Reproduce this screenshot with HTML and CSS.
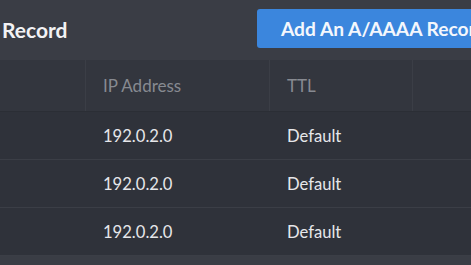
FILE: index.html
```html
<!DOCTYPE html>
<html lang="en">
<head>
<meta charset="utf-8">
<title>Records</title>
<link rel="stylesheet" href="styles.css">
</head>
<body>
<div class="page">
  <header class="topbar">
    <h1 class="title">Record</h1>
    <button class="add-btn" type="button">Add An A/AAAA Record</button>
  </header>
  <div class="table">
    <div class="row head">
      <div class="cell"></div>
      <div class="cell">IP Address</div>
      <div class="cell">TTL</div>
      <div class="cell"></div>
    </div>
    <div class="row">
      <div class="cell"></div>
      <div class="cell">192.0.2.0</div>
      <div class="cell">Default</div>
      <div class="cell"></div>
    </div>
    <div class="row">
      <div class="cell"></div>
      <div class="cell">192.0.2.0</div>
      <div class="cell">Default</div>
      <div class="cell"></div>
    </div>
    <div class="row">
      <div class="cell"></div>
      <div class="cell">192.0.2.0</div>
      <div class="cell">Default</div>
      <div class="cell"></div>
    </div>
  </div>
  <div class="footer-band"></div>
</div>
</body>
</html>
```
FILE: styles.css
```css
html, body {
  margin: 0;
  padding: 0;
  overflow: hidden;
  background: #2f323a;
}
body {
  font-family: Lato, "Open Sans", sans-serif;
  width: 471px;
  height: 265px;
}
.page {
  display: flex;
  flex-direction: column;
  width: 471px;
  overflow: hidden;
}
.topbar {
  display: flex;
  align-items: center;
  height: 60px;
  background: #3a3d45;
  overflow: hidden;
  white-space: nowrap;
}
.title {
  flex: 0 0 255px;
  margin: -2px 0 0 0;
  padding-left: 2px;
  font-size: 21px;
  font-weight: 700;
  color: #f2f2f4;
}
.add-btn {
  flex: none;
  height: 39px;
  margin-top: -3px;
  padding: 0 24px;
  border: none;
  border-radius: 3px;
  background: #3b86dd;
  color: #f4f7fc;
  font-family: inherit;
  font-size: 19.2px;
  font-weight: 700;
}
.table {
  display: flex;
  flex-direction: column;
}
.row {
  display: grid;
  grid-template-columns: 86px 184px 143px 1fr;
  height: 48px;
  border-bottom: 1px solid #3b3e46;
  box-sizing: border-box;
  background: #2f323a;
}
.row.head {
  height: 52px;
  background: #33363e;
  border-bottom: 1px solid #2b2e35;
}
.cell {
  display: flex;
  align-items: center;
  padding-left: 17px;
  font-size: 16.6px;
  color: #e6e7ea;
}
.head .cell {
  font-size: 17px;
  color: #878a91;
  border-right: 1px solid #3b3e46;
}
.head .cell:last-child {
  border-right: none;
}
.footer-band {
  height: 10px;
  background: #3a3d45;
}
```
